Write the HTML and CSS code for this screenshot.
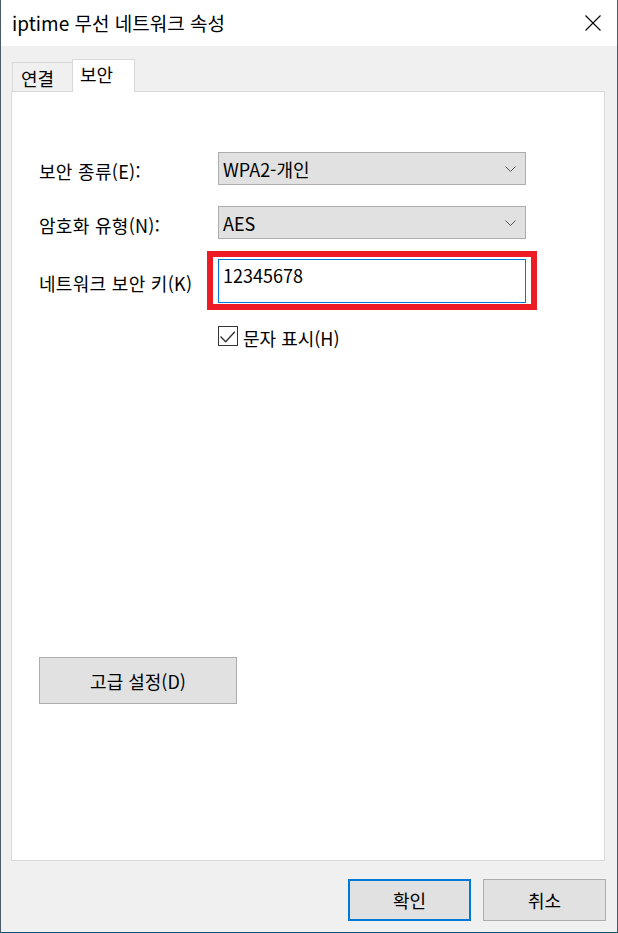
FILE: index.html
```html
<!DOCTYPE html>
<html lang="ko">
<head>
<meta charset="utf-8">
<title>iptime 무선 네트워크 속성</title>
<link rel="stylesheet" href="styles.css">
</head>
<body>
<div class="window">
  <header class="titlebar">
    <span class="title">iptime 무선 네트워크 속성</span>
    <span class="close" aria-label="닫기">
      <svg width="16" height="16" viewBox="0 0 16 16"><path d="M0.5 0.5 L15.5 15.5 M15.5 0.5 L0.5 15.5" stroke="#000" stroke-width="1.1" fill="none"/></svg>
    </span>
  </header>
  <main class="client">
    <div class="tabs">
      <div class="tab">연결</div>
      <div class="tab active">보안</div>
    </div>
    <section class="panel">
      <div class="row row-type">
        <span class="label">보안 종류(E):</span>
        <div class="select">
          <span>WPA2-개인</span>
          <svg class="chev" width="11" height="6" viewBox="0 0 11 6"><path d="M0.5 0.5 L5.5 5.5 L10.5 0.5" stroke="#555" stroke-width="1" fill="none"/></svg>
        </div>
      </div>
      <div class="row row-enc">
        <span class="label">암호화 유형(N):</span>
        <div class="select">
          <span>AES</span>
          <svg class="chev" width="11" height="6" viewBox="0 0 11 6"><path d="M0.5 0.5 L5.5 5.5 L10.5 0.5" stroke="#555" stroke-width="1" fill="none"/></svg>
        </div>
      </div>
      <div class="row row-key">
        <span class="label">네트워크 보안 키(K)</span>
        <div class="input-wrap">
          <div class="input">12345678</div>
          <div class="highlight"></div>
        </div>
      </div>
      <div class="row row-check">
        <span class="label spacer"></span>
        <div class="check">
          <span class="box">
            <svg width="18" height="18" viewBox="0 0 18 18"><path d="M1.5 9.5 L6.7 14.7 L15.8 4.8" stroke="#333" stroke-width="1.4" fill="none"/></svg>
          </span>
          <span class="check-label">문자 표시(H)</span>
        </div>
      </div>
      <button class="btn advanced">고급 설정(D)</button>
    </section>
    <footer class="footer">
      <button class="btn primary">확인</button>
      <button class="btn">취소</button>
    </footer>
  </main>
</div>
</body>
</html>
```
FILE: styles.css
```css
html, body {
  margin: 0;
  padding: 0;
}
body {
  width: 618px;
  height: 933px;
  overflow: hidden;
  font-family: "Noto Sans CJK KR", "Noto Sans", sans-serif;
  color: #000;
}
.window {
  box-sizing: border-box;
  width: 618px;
  height: 933px;
  border-left: 1px solid #4a5a66;
  border-right: 1px solid #4a5a66;
  border-bottom: 1px solid #1b4e6b;
  display: flex;
  flex-direction: column;
  background: #f0f0f0;
}
.titlebar {
  flex: none;
  height: 46px;
  background: #fff;
  display: flex;
  align-items: center;
  justify-content: space-between;
  padding: 0 16px 0 11px;
}
.title {
  font-size: 19px;
  line-height: 24px;
}
.close {
  display: flex;
  width: 16px;
  height: 16px;
}
.client {
  flex: 1;
  display: flex;
  flex-direction: column;
  padding: 13px 12px 0 10px;
  min-height: 0;
}
.tabs {
  flex: none;
  height: 32px;
  display: flex;
  align-items: flex-start;
  padding-left: 1px;
  position: relative;
  z-index: 1;
}
.tab {
  box-sizing: border-box;
  font-size: 18px;
  line-height: 22px;
  border: 1px solid #d9d9d9;
  border-bottom: none;
  background: #f0f0f0;
}
.tab:first-child {
  width: 61px;
  height: 29px;
  margin-top: 3px;
  padding: 4px 0 0 8px;
}
.tab.active {
  width: 63px;
  height: 33px;
  margin-left: -1px;
  background: #fff;
  padding: 3px 0 0 7px;
}
.panel {
  flex: 1;
  box-sizing: border-box;
  background: #fff;
  border: 1px solid #d9d9d9;
  padding: 60px 0 0 27px;
  display: flex;
  flex-direction: column;
  align-items: flex-start;
}
.row {
  display: flex;
  align-items: center;
}
.label {
  width: 179px;
  flex: none;
  font-size: 18px;
  line-height: 22px;
  padding-top: 4px;
  letter-spacing: 0.3px;
}
.row-type { margin-bottom: 21px; }
.row-enc { margin-bottom: 20px; }
.row-key { margin-bottom: 23px; }
.row-check { height: 20px; }
.label.spacer {
  padding: 0;
  height: 0;
}
.select {
  box-sizing: border-box;
  width: 308px;
  height: 33px;
  background: #e1e1e1;
  border: 1px solid #adadad;
  display: flex;
  align-items: center;
  justify-content: space-between;
  padding: 0 9px 0 4px;
  font-size: 18px;
  line-height: 22px;
}
.input-wrap {
  position: relative;
  width: 308px;
  height: 44px;
}
.input {
  box-sizing: border-box;
  width: 308px;
  height: 44px;
  border: 1px solid #0078d7;
  padding: 4px 4px 0 4px;
  font-size: 18px;
  line-height: 22px;
  background: #fff;
}
.highlight {
  position: absolute;
  left: -11px;
  right: -11px;
  top: -8px;
  bottom: -7px;
  border: 6px solid #ed1c24;
  pointer-events: none;
}
.check {
  display: flex;
  align-items: center;
  gap: 5px;
}
.box {
  box-sizing: border-box;
  width: 20px;
  height: 20px;
  border: 1px solid #333;
  background: #fff;
  display: flex;
}
.check-label {
  font-size: 18px;
  line-height: 22px;
  position: relative;
  top: 2px;
}
.btn {
  box-sizing: border-box;
  font-family: "Noto Sans CJK KR", "Noto Sans", sans-serif;
  font-size: 18px;
  line-height: 22px;
  color: #000;
  background: #e1e1e1;
  border: 1px solid #adadad;
  padding: 0;
  margin: 0;
}
.advanced {
  width: 198px;
  height: 47px;
  margin-top: 311px;
}
.footer {
  flex: none;
  height: 71px;
  box-sizing: border-box;
  display: flex;
  justify-content: flex-end;
  align-items: flex-start;
  gap: 12px;
  padding-top: 18px;
  margin-right: -1px;
}
.footer .btn {
  width: 123px;
  height: 42px;
}
.btn.primary {
  border: 2px solid #0078d7;
}
```
